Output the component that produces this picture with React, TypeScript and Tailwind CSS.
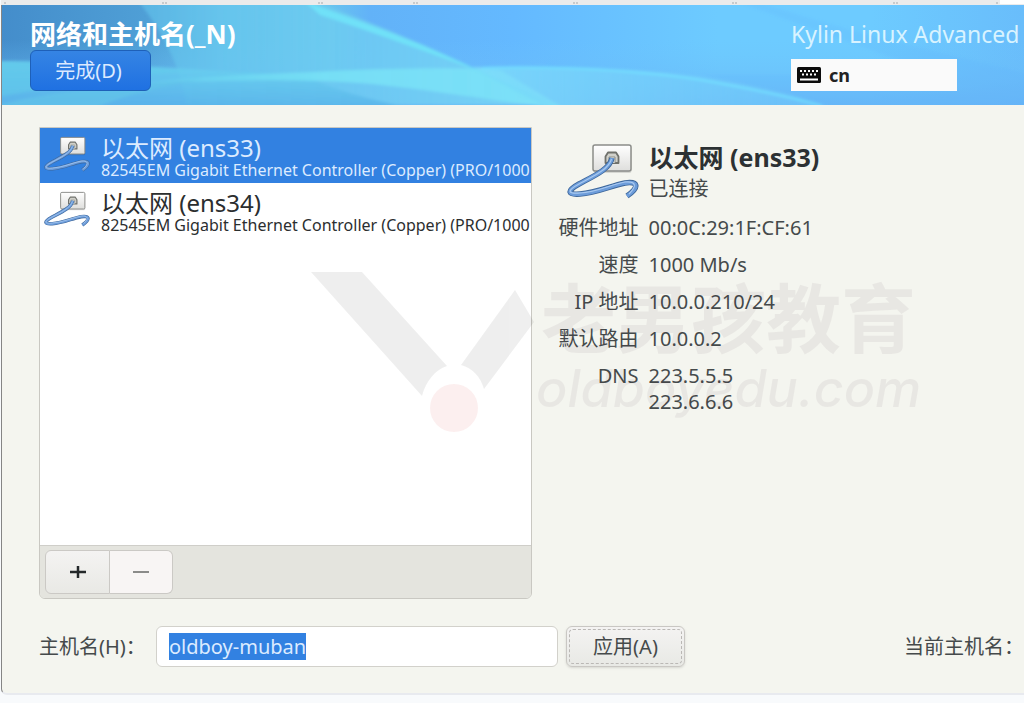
import { useEffect, useRef, useState } from "react";

type Device = { id: string; name: string; hardware: string };

const devices: Device[] = [
  { id: "ens33", name: "以太网 (ens33)", hardware: "82545EM Gigabit Ethernet Controller (Copper) (PRO/1000" },
  { id: "ens34", name: "以太网 (ens34)", hardware: "82545EM Gigabit Ethernet Controller (Copper) (PRO/1000" },
];

const details: { label: string; values: string[] }[] = [
  { label: "硬件地址", values: ["00:0C:29:1F:CF:61"] },
  { label: "速度", values: ["1000 Mb/s"] },
  { label: "IP 地址", values: ["10.0.0.210/24"] },
  { label: "默认路由", values: ["10.0.0.2"] },
  { label: "DNS", values: ["223.5.5.5", "223.6.6.6"] },
];

function EthernetIcon({ className }: { className: string }) {
  return (
    <svg viewBox="0 0 72 56" className={className} aria-hidden="true">
      <defs>
        <linearGradient id="plate" x1="0" y1="0" x2="0" y2="1">
          <stop offset="0" stopColor="#ffffff" />
          <stop offset="1" stopColor="#dededc" />
        </linearGradient>
      </defs>
      <rect x="26.5" y="3" width="38" height="27" rx="2" fill="#000000" opacity="0.12" />
      <rect x="26" y="2" width="38" height="26" rx="2" fill="url(#plate)" stroke="#8b8c89" strokeWidth="1.5" />
      <path d="M38.500 20V13.500L41 9.500H49L51.500 13.500V20Z" fill="#d0d0ca" stroke="#6f706b" strokeWidth="1.800" strokeLinejoin="round" />
      <path d="M42 20V14H48V20" fill="#f1f1ec" stroke="#8b8c85" strokeWidth="1" />
      <path d="M45 15C43 26 27 33 12 41C-1 48 1 52 13 51C30 50 43 43 58 40C71 38 73 44 60 53" fill="none" stroke="#3d6699" strokeWidth="5.500" />
      <path d="M45 15C43 26 27 33 12 41C-1 48 1 52 13 51C30 50 43 43 58 40C71 38 73 44 60 53" fill="none" stroke="#6c9cda" strokeWidth="3.800" />
      <path d="M44.500 16C42 26 27 33 12 41C-1 48 1 51 13 50C30 49 43 42 58 39C68 38 71 42 62 51" fill="none" stroke="#a9c9ef" strokeWidth="1.200" />
    </svg>
  );
}

function KeyboardIcon() {
  return (
    <svg viewBox="0 0 24 16" className="h-4 w-6" aria-hidden="true">
      <rect width="24" height="16" rx="1.500" fill="#0c0c0c" />
      <g fill="#ffffff">
        <path d="M3 3h2v2H3zM7 3h2v2H7zM11 3h2v2h-2zM15 3h2v2h-2zM19 3h2v2h-2z" />
        <path d="M5 6.500h2v2H5zM9 6.500h2v2H9zM13 6.500h2v2h-2zM17 6.500h2v2h-2z" />
        <path d="M3 11.500h18v2H3z" />
      </g>
    </svg>
  );
}

function HeaderArt() {
  return (
    <svg viewBox="0 0 1022 100" preserveAspectRatio="none" className="absolute inset-0 h-full w-full" aria-hidden="true">
      <defs>
        <linearGradient id="sky" x1="0" y1="0" x2="1" y2="0">
          <stop offset="0" stopColor="#448dcb" />
          <stop offset="0.140" stopColor="#4f9fd6" />
          <stop offset="0.220" stopColor="#63bfea" />
          <stop offset="0.320" stopColor="#68c4ee" />
          <stop offset="0.360" stopColor="#62b2f8" />
          <stop offset="0.500" stopColor="#64b9ff" />
          <stop offset="0.700" stopColor="#6dcbff" />
          <stop offset="0.850" stopColor="#6dcbff" />
          <stop offset="1" stopColor="#69bdfb" />
        </linearGradient>
        <linearGradient id="dim" x1="0" y1="0" x2="0" y2="1">
          <stop offset="0" stopColor="#6ec4fa" stopOpacity="0" />
          <stop offset="1" stopColor="#66b2f5" stopOpacity="0.750" />
        </linearGradient>
        <linearGradient id="water" x1="0" y1="0" x2="0" y2="1">
          <stop offset="0" stopColor="#6cd6f2" />
          <stop offset="1" stopColor="#56b0e8" />
        </linearGradient>
        <linearGradient id="beam" x1="0" y1="0" x2="1" y2="0">
          <stop offset="0" stopColor="#62c3ec" stopOpacity="0.700" />
          <stop offset="1" stopColor="#7ad8f6" />
        </linearGradient>
        <linearGradient id="wave" x1="0" y1="0" x2="1" y2="0">
          <stop offset="0" stopColor="#6fdcf2" stopOpacity="0.200" />
          <stop offset="0.450" stopColor="#78e4f6" stopOpacity="0.800" />
          <stop offset="1" stopColor="#7de3f9" stopOpacity="0.800" />
        </linearGradient>
        <linearGradient id="haze" x1="0" y1="0" x2="1" y2="0">
          <stop offset="0" stopColor="#7eddfa" stopOpacity="0.800" />
          <stop offset="1" stopColor="#74cdfb" stopOpacity="0.300" />
        </linearGradient>
        <filter id="soft" x="-5%" y="-20%" width="110%" height="140%">
          <feGaussianBlur stdDeviation="1.800" />
        </filter>
      </defs>
      <rect width="1022" height="100" fill="url(#sky)" />
      <rect y="35" width="1022" height="65" fill="url(#dim)" />
      <g filter="url(#soft)">
        <path d="M135 -5H310C380 22 430 42 476 66L540 100H185C180 70 165 30 135 -5Z" fill="url(#beam)" opacity="0.850" />
        <path d="M-5 56C90 56 200 66 300 70C330 85 380 98 420 105H-5Z" fill="url(#water)" opacity="0.750" />
        <path d="M-5 57C90 57 140 60 185 66C120 72 60 80 -5 92Z" fill="#62cdec" opacity="0.500" />
        <path d="M120 80C200 70 270 69 330 66C400 63 470 62 500 66L565 105C450 90 390 78 320 76C260 74 190 76 120 80Z" fill="url(#wave)" />
        <path d="M302 -4C370 20 430 42 482 68C430 49 370 27 318 10Z" fill="#70e1f8" />
        <path d="M470 62C600 60 680 67 720 76C770 84 810 94 835 105H565Z" fill="url(#haze)" />
        <path d="M480 63C560 61 640 66 700 75C750 84 790 92 820 101" fill="none" stroke="#73e0ff" strokeWidth="2" />
        <path d="M-5 100C60 84 130 80 200 74C160 82 120 90 90 105H-5Z" fill="#62c5ea" opacity="0.700" />
        <path d="M750 -5C850 28 940 48 1030 70V105H835C780 88 740 78 700 70H940C880 50 800 20 730 -5Z" fill="#60b4fa" opacity="0.180" />
      </g>
    </svg>
  );
}

function Watermark() {
  return (
    <svg
      viewBox="0 0 640 200"
      className="pointer-events-none absolute top-[145px] left-[308px] h-[200px] w-[640px] overflow-visible"
      aria-hidden="true"
    >
      <g fill="#202020" opacity="0.070">
        <path d="M1 22H52L137 116C125 120 116 131 112 146Z" />
        <path d="M151 115L205 40L224 72L174 139C171 128 163 118 151 115Z" />
      </g>
      <circle cx="144" cy="158" r="24" fill="#d93636" opacity="0.080" />
      <g fill="#402038" opacity="0.060">
        <text x="231" y="97" className="font-['Noto_Sans_CJK_SC',sans-serif] text-[75px] font-bold">老男孩教育</text>
        <text x="226" y="157" className="font-[Inter,sans-serif] text-[52px] font-medium italic">oldboyedu.com</text>
      </g>
    </svg>
  );
}

export default function App() {
  const [selected, setSelected] = useState("ens33");
  const [host, setHost] = useState("oldboy-muban");
  const hostRef = useRef<HTMLInputElement>(null);

  useEffect(() => {
    hostRef.current?.focus();
    hostRef.current?.select();
  }, []);

  return (
    <div className="flex min-h-screen flex-col overflow-hidden bg-[#f8fafc] pb-2 pl-px font-['Noto_Sans','Noto_Sans_CJK_SC',sans-serif] text-[20px] leading-7 text-[#454a4b]">
      <div className="h-[5px] bg-[#ebebeb]">
        <svg viewBox="0 0 1023 5" preserveAspectRatio="none" className="h-full w-full" aria-hidden="true">
          <path d="M999 0h24v4h-24z" fill="#ffffff" />
          <path d="M4 2v2M162 2v2M165 2v2M318 2v2M321 2v2M413 2v2M416 2v2M573 2v2M576 2v2M732 2v2M735 2v2M893 2v2M896 2v2M996 2v2" stroke="#a5a9ad" />
        </svg>
      </div>
      <div className="flex flex-1 flex-col overflow-hidden rounded-bl-md border-b-2 border-l border-b-[#e8eaef] border-l-[#858585] bg-[#f4f5ef]">
        <header className="relative h-[100px]">
          <HeaderArt />
          <div className="relative flex items-start justify-between pt-[14px] pl-7">
            <div className="flex flex-col items-start">
              <h1 className="text-[26px] leading-[31px] font-bold whitespace-nowrap text-white">网络和主机名(_N)</h1>
              <button className="h-[41px] w-[121px] rounded-md border border-[#1e60b8] bg-linear-to-b from-[#3584e4] to-[#1f71e2] pr-1 text-[20px] text-[#dceaff]">
                完成(D)
              </button>
            </div>
            <div className="flex w-[233px] flex-col gap-[10px]">
              <p className="text-[23px] leading-[30px] whitespace-nowrap text-[#d8f3ff]">Kylin Linux Advanced</p>
              <button className="flex h-8 w-[166px] items-center gap-2 bg-[#fafafa] px-[6px] text-[18px] font-bold text-[#222222]">
                <KeyboardIcon />
                cn
              </button>
            </div>
          </div>
        </header>

        <main className="relative flex flex-1 flex-col gap-[27px] pt-[22px] pb-[26px] pl-[37px]">
          <div className="flex flex-1">
            <section className="flex w-1/2 shrink-0 flex-col overflow-hidden rounded-b-md border border-[#c9c8c2]">
              <ul className="flex-1 bg-white">
                {devices.map((d) => (
                  <li key={d.id}>
                    <button
                      onClick={() => setSelected(d.id)}
                      aria-pressed={selected === d.id}
                      className={
                        "flex h-[55px] w-full gap-[11px] overflow-hidden pl-1 text-left whitespace-nowrap " +
                        (selected === d.id ? "bg-[#3281e1] text-[#dcebff]" : "bg-white text-[#2b2e2f]")
                      }
                    >
                      <EthernetIcon className="mt-2 h-9 w-[46px] shrink-0" />
                      <span className="flex flex-col pt-[6px]">
                        <span className="text-[24px] leading-[27px]">{d.name}</span>
                        <span className="text-[16px] leading-[18px]">{d.hardware}</span>
                      </span>
                    </button>
                  </li>
                ))}
              </ul>
              <div className="flex h-[53px] items-center border-t border-[#cfcec9] bg-[#e4e4de] px-[5px]">
                <button aria-label="添加" className="flex h-11 w-[65px] items-center justify-center rounded-l-md border border-[#cbc9c5] bg-linear-to-b from-[#f4f3f2] to-[#e9e9e5]">
                  <svg viewBox="0 0 16 16" className="h-4 w-4"><path d="M8 2v12M0 8h16" stroke="#24282a" strokeWidth="2.500" /></svg>
                </button>
                <button aria-label="移除" className="flex h-11 w-[63px] items-center justify-center rounded-r-md border border-l-0 border-[#cbc9c5] bg-[#f8f5f4]">
                  <svg viewBox="0 0 16 16" className="h-4 w-4"><path d="M0 8h16" stroke="#8b8b89" strokeWidth="2" /></svg>
                </button>
              </div>
            </section>

            <section className="flex flex-col gap-2 pt-[16px] pl-[27px]">
              <div className="flex gap-[10px]">
                <EthernetIcon className="ml-2 h-[56px] w-[72px]" />
                <div className="whitespace-nowrap">
                  <h2 className="text-[25px] leading-7 font-bold text-[#2c3133]">以太网 (ens33)</h2>
                  <p className="leading-9">已连接</p>
                </div>
              </div>
              <dl className="grid grid-cols-[80px_1fr] gap-x-[10px] gap-y-[11px] leading-[26px] whitespace-nowrap">
                {details.map((row) => (
                  <div key={row.label} className="contents">
                    <dt className="text-right">{row.label}</dt>
                    <dd>
                      {row.values.map((v) => (
                        <div key={v}>{v}</div>
                      ))}
                    </dd>
                  </div>
                ))}
              </dl>
            </section>
          </div>

          <div className="flex items-center">
            <label htmlFor="host" className="w-[117px] whitespace-nowrap">主机名(H)：</label>
            <input
              id="host"
              ref={hostRef}
              value={host}
              onChange={(e) => setHost(e.target.value)}
              className="h-[41px] w-[402px] rounded-md border border-[#d2d1cb] bg-white px-3 text-[20px] leading-6 outline-none selection:bg-[#3281e1] selection:text-[#dcebff]"
            />
            <button className="ml-2 h-[41px] w-[119px] rounded-md border border-[#c9c7c3] bg-linear-to-b from-[#f4f3f2] to-[#e8e9e5] p-[2px] shadow-sm">
              <span className="flex h-full items-center justify-center rounded-sm border border-dashed border-[#bab8b5]">应用(A)</span>
            </button>
            <p className="ml-auto whitespace-nowrap">当前主机名：</p>
          </div>
          <Watermark />
        </main>
      </div>
    </div>
  );
}
